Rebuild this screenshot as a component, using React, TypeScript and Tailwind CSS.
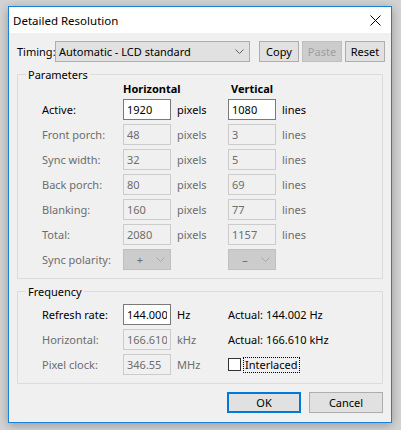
import React from 'react';

type Row = { label: string; h: string; v: string; enabled?: boolean };

const rows: Row[] = [
  { label: 'Active:', h: '1920', v: '1080', enabled: true },
  { label: 'Front porch:', h: '48', v: '3' },
  { label: 'Sync width:', h: '32', v: '5' },
  { label: 'Back porch:', h: '80', v: '69' },
  { label: 'Blanking:', h: '160', v: '77' },
  { label: 'Total:', h: '2080', v: '1157' },
];

const Chevron = ({ color }: { color: string }) => (
  <svg width="9" height="5" viewBox="0 0 9 5" fill="none">
    <path d="M0.5 0.5 L4.5 4.5 L8.5 0.5" stroke={color} strokeWidth="1" />
  </svg>
);

const Field = ({ value, enabled }: { value: string; enabled?: boolean }) => (
  <input
    readOnly
    value={value}
    className={
      'w-[48px] h-[21px] px-[3px] outline-none ' +
      (enabled
        ? 'bg-white border border-[#7a7a7a] text-black'
        : 'bg-[#f0f0f0] border border-[#cccccc] text-[#6d6d6d]')
    }
  />
);

const Polarity = ({ sign }: { sign: string }) => (
  <div className="w-[48px] h-[21px] bg-[#cccccc] border border-[#bfbfbf] flex items-center">
    <span className="w-[32px] text-center text-[#6d6d6d]">{sign}</span>
    <Chevron color="#a8a8a8" />
  </div>
);

const Button = ({ children, disabled, primary, className = '' }: { children: React.ReactNode; disabled?: boolean; primary?: boolean; className?: string }) => (
  <div
    className={
      'h-[21px] flex items-center justify-center ' +
      (disabled
        ? 'bg-[#cccccc] border border-[#bfbfbf] text-[#a0a0a0] '
        : primary
          ? 'bg-[#e1e1e1] border-2 border-[#0078d7] text-black '
          : 'bg-[#e1e1e1] border border-[#adadad] text-black ') +
      className
    }
  >
    {children}
  </div>
);

export default function App() {
  return (
    <div className="w-[401px] h-[430px] bg-[#d4d4d4] pt-[6px] pl-[8px] font-['Segoe_UI','Noto_Sans',sans-serif] text-[11px] leading-[15px] text-black">
      <div className="w-[384px] h-[417px] border border-[#1b80d8] bg-[#f0f0f0] shadow-[0_2px_10px_rgba(0,0,0,0.3)] flex flex-col">
        {/* title bar */}
        <div className="h-[26px] bg-white flex items-center justify-between pl-[4px] pr-[10px]">
          <span className="text-[11.5px]">Detailed Resolution</span>
          <svg width="11" height="11" viewBox="0 0 11 11">
            <path d="M0.5 0.5 L10.5 10.5 M10.5 0.5 L0.5 10.5" stroke="#000" strokeWidth="1" />
          </svg>
        </div>

        {/* timing */}
        <div className="mt-[8px] pl-[8px] flex items-center h-[21px]">
          <span className="w-[38px] whitespace-nowrap">Timing:</span>
          <div className="w-[195px] h-[21px] bg-[#e1e1e1] border border-[#adadad] flex items-center justify-between pl-[3px] pr-[5px]">
            <span>Automatic - LCD standard</span>
            <Chevron color="#606060" />
          </div>
          <div className="ml-[9px] flex gap-[3px]">
            <Button className="w-[40px]">Copy</Button>
            <Button className="w-[40px]" disabled>Paste</Button>
            <Button className="w-[40px]">Reset</Button>
          </div>
        </div>

        {/* parameters */}
        <fieldset className="mt-[5px] mx-[8px] border border-[#dcdcdc] pb-[8px]">
          <legend className="ml-[8px] px-[2px] leading-[15px]">Parameters</legend>
          <div className="pl-[24px] grid grid-cols-[81px_48px_57px_48px_1fr] gap-y-[4px] items-center">
            <div className="col-start-2 text-center font-bold h-[13px] leading-[13px] whitespace-nowrap">Horizontal</div>
            <div className="col-start-4 text-center font-bold h-[13px] leading-[13px] whitespace-nowrap">Vertical</div>
            <div />
            {rows.map((r) => {
              const tone = r.enabled ? 'text-black' : 'text-[#6d6d6d]';
              return (
                <React.Fragment key={r.label}>
                  <span className={tone}>{r.label}</span>
                  <Field value={r.h} enabled={r.enabled} />
                  <span className={'pl-[6px] ' + tone}>pixels</span>
                  <Field value={r.v} enabled={r.enabled} />
                  <span className={'pl-[6px] ' + tone}>lines</span>
                </React.Fragment>
              );
            })}
            <span className="text-[#6d6d6d]">Sync polarity:</span>
            <Polarity sign="+" />
            <span />
            <Polarity sign="–" />
            <span />
          </div>
        </fieldset>

        {/* frequency */}
        <fieldset className="mt-[5px] mx-[8px] border border-[#dcdcdc] pb-[8px]">
          <legend className="ml-[8px] px-[2px] leading-[15px]">Frequency</legend>
          <div className="pl-[24px] mt-[5px] grid grid-cols-[81px_48px_57px_1fr] gap-y-[4px] items-center">
            <span>Refresh rate:</span>
            <Field value="144.000" enabled />
            <span className="pl-[6px]">Hz</span>
            <span>Actual: 144.002 Hz</span>

            <span className="text-[#6d6d6d]">Horizontal:</span>
            <Field value="166.610" />
            <span className="pl-[6px] text-[#6d6d6d]">kHz</span>
            <span>Actual: 166.610 kHz</span>

            <span className="text-[#6d6d6d]">Pixel clock:</span>
            <Field value="346.55" />
            <span className="pl-[6px] text-[#6d6d6d]">MHz</span>
            <div className="flex items-center">
              <span className="w-[13px] h-[13px] bg-white border border-[#333333]" />
              <span className="ml-[2px] border border-dotted border-black leading-[14px] px-[1px]">Interlaced</span>
            </div>
          </div>
        </fieldset>

        {/* buttons */}
        <div className="mt-[8px] flex justify-end gap-[8px] pr-[8px]">
          <Button primary className="w-[74px]">OK</Button>
          <Button className="w-[74px]">Cancel</Button>
        </div>
      </div>
    </div>
  );
}
